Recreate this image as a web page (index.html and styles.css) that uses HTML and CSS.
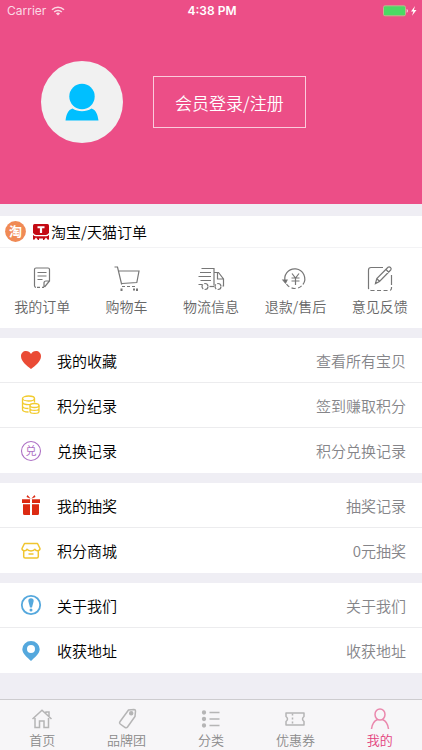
FILE: index.html
```html
<!DOCTYPE html>
<html lang="zh-CN">
<head>
<meta charset="utf-8">
<meta name="viewport" content="width=device-width, initial-scale=1">
<title>我的</title>
<link rel="stylesheet" href="styles.css">
</head>
<body>
<header class="hero">
  <div class="status">
    <div class="status-side">
      <span>Carrier</span>
      <svg width="14" height="10" viewBox="0 0 14 10" fill="none" stroke="currentColor" stroke-width="1.5"><path d="M1 3.7a8.5 8.5 0 0 1 12 0M3.2 6a5.4 5.4 0 0 1 7.6 0"/><path d="M7 9.6 4.9 7.5a3 3 0 0 1 4.2 0z" fill="currentColor" stroke="none"/></svg>
    </div>
    <span class="clock">4:38 PM</span>
    <div class="status-side status-end">
      <svg width="34" height="12" viewBox="0 0 34 12"><rect x=".5" y=".8" width="22" height="10" rx="1.5" fill="#4cd964" stroke="#c3b48f"/><path d="M23.6 4c1.8.2 1.8 3.5 0 3.7z" fill="#f8c5d8"/><path d="M32 1 28 6.600h2.400L29 10.800l4.500-5.800h-2.600z" fill="#fff"/></svg>
    </div>
  </div>
  <div class="profile">
    <div class="avatar">
      <svg width="34" height="38" viewBox="0 0 34 38" fill="#00bfff"><circle cx="17" cy="13.500" r="12.700"/><path d="M.5 37.500C1.500 31 3 27 7.500 25.500c5.500 3.600 13.500 3.600 19 0C31 27 32.500 31 33.500 37.500z"/></svg>
    </div>
    <button class="login" type="button">会员登录/注册</button>
  </div>
</header>
<main>
  <section class="card">
    <h2 class="orders-title">
      <svg width="21" height="21" viewBox="0 0 21 21"><circle cx="10.500" cy="10.500" r="10.400" fill="#f08a55"/><text class="tao" x="10.500" y="15" text-anchor="middle">淘</text></svg>
      <svg class="tmall" width="16" height="16" viewBox="0 0 16 16"><rect width="16" height="16" rx="1.500" fill="#c40a14"/><path d="M4.500 2.300h7v2H9.100v4.600H6.900V4.300H4.500z" fill="#fff"/><path d="M0 9.500Q1 11.500 3 11.700h10q2-.2 3-2.200" fill="none" stroke="#fff" stroke-width="1.200"/><path d="M1 16l2-2.500L5 16zM6 14.500h4V16H6zM11 16l2-2.500 2 2.500z" fill="#fff"/></svg>
      <span>淘宝/天猫订单</span>
    </h2>
    <nav class="shortcuts">
      <a href="#orders"><svg width="28" height="28" viewBox="0 0 28 28"><path d="M8 23.300q-1.500 0-1.500-1.500V5.500Q6.500 4 8 4h12q1.500 0 1.500 1.500V17l-5 6M16 23v-4q0-2 2-2h3.500M9.500 8.500h9M9.500 12h9M9.500 15.500h5"/><path d="M9 23.300h7" stroke-dasharray="3 2"/></svg>我的订单</a>
      <a href="#cart"><svg width="28" height="28" viewBox="0 0 28 28"><path d="M1.500 3h3l4.200 17.500M6 7h20l-2.200 11.500L9 19.500"/><path d="M9 22.500h15" stroke-dasharray="3 2"/><path d="M8.500 24.500v2.500M21 24.500v2M24 24.500v2.500" stroke-width="2"/></svg>购物车</a>
      <a href="#delivery"><svg width="28" height="28" viewBox="0 0 28 28"><path d="M4.500 4.500h12.500v17M17 8.500h4.500l5 6.500V22h-1M20.500 8.500V15h6M3 8.500h11M1.500 12.500H14M3.500 16.500H14M1.500 20.500h3.500"/><path d="M12.500 22.500h4.500"/><g stroke-dasharray="5 1.500"><circle cx="8" cy="22.500" r="3"/><circle cx="21" cy="22.500" r="3"/></g></svg>物流信息</a>
      <a href="#refund"><svg width="28" height="28" viewBox="0 0 28 28"><path d="M4.500 18.500a10 10 0 1 1 17.500 2"/><path d="M5.500 20a10 10 0 0 0 17-.5" stroke-dasharray="4 2.500"/><path d="M2 16h4l-1.500 3z" fill="currentColor"/><path d="m11 9.500 3.500 4.500L18 9.500M14.500 14v7M10.500 14h8M10.500 17h8"/></svg>退款/售后</a>
      <a href="#feedback"><svg width="28" height="28" viewBox="0 0 28 28"><path d="M17 3.500H5Q2.500 3.500 2.500 6v15M25.500 11v10M9.500 19.500l1.300-5L22 3.300q1.200-1 2.500.2t.2 2.500L13.500 17.500zM20 5.500l3 3M10.800 14.500l2.700 3"/><path d="M2.500 21v3q0 2.500 2.500 2.500h18q2.500 0 2.500-2.500v-3" stroke-dasharray="4 2.500"/></svg>意见反馈</a>
    </nav>
  </section>
  <section class="card list">
    <a href="#favorites"><svg width="22" height="22" viewBox="0 0 22 22"><path d="M11 20C7 17 1 12.500 1 7.200 1 4 3.300 2 6 2c2.200 0 4 1 5 3 1-2 2.800-3 5-3 2.700 0 5 2 5 5.200C21 12.500 15 17 11 20z" fill="#ea4b35"/></svg><span>我的收藏</span><small>查看所有宝贝</small></a>
    <a href="#points"><svg width="22" height="22" viewBox="0 0 22 22" fill="none" stroke="#f2cb2e" stroke-width="1.300"><ellipse cx="8.500" cy="4.500" rx="6" ry="2.500"/><path d="M2.500 4.500v11c0 1.500 2.700 2.500 6 2.500M14.500 4.500v4M2.500 8c0 3 7 3 9 2M2.500 12c0 2 3 2.500 6 2.500"/><ellipse cx="14.500" cy="11.500" rx="4.500" ry="2"/><path d="M10 11.500v6c0 2.500 9 2.500 9 0v-6M10 14.500c0 2.500 9 2.500 9 0"/></svg><span>积分纪录</span><small>签到赚取积分</small></a>
    <a href="#exchange"><svg width="22" height="22" viewBox="0 0 22 22"><circle cx="11" cy="11" r="9.500" fill="none" stroke="#ad70c4" stroke-width="1.100"/><text class="dui" x="11" y="15" text-anchor="middle">兑</text></svg><span>兑换记录</span><small>积分兑换记录</small></a>
  </section>
  <section class="card list">
    <a href="#lottery"><svg width="22" height="22" viewBox="0 0 22 22" fill="#dc2a12"><path d="M2 5.300h8V9H2zM12 5.300h8V9h-8zM3 10.200h7V21H4.500Q3 21 3 19.500zM12 10.200h7v9.300q0 1.500-1.500 1.500H12z"/><path d="M10.700 4.700 6.500 3l1-2zM11.300 4.700 15.500 3l-1-2z"/></svg><span>我的抽奖</span><small>抽奖记录</small></a>
    <a href="#mall"><svg width="22" height="22" viewBox="0 0 22 22" fill="none" stroke="#f0c52e" stroke-width="1.500" stroke-linejoin="round"><path d="M4.500 3.500h13L20 8.500c0 2.500-4 3-5 .7-1.500 2.300-6.500 2.300-8 0-1 2.300-5 1.800-5-.7zM3.700 11v5.500Q3.700 18 5.200 18h11.600q1.500 0 1.500-1.500V11M8.500 14h5"/></svg><span>积分商城</span><small>0元抽奖</small></a>
  </section>
  <section class="card list">
    <a href="#about"><svg width="22" height="22" viewBox="0 0 22 22"><circle cx="11" cy="11" r="9.200" fill="none" stroke="#55a8dd" stroke-width="1.800"/><path d="M8.300 7a2.700 2.700 0 0 1 5.400 0L12 13.500h-2z" fill="#55a8dd"/><circle cx="11" cy="16" r="1.500" fill="#55a8dd"/></svg><span>关于我们</span><small>关于我们</small></a>
    <a href="#address"><svg width="22" height="22" viewBox="0 0 22 22"><path fill-rule="evenodd" d="M11 21C7.500 17.500 2.300 13.500 2.300 9.200a8.700 8.200 0 0 1 17.400 0C19.700 13.500 14.500 17.500 11 21zM11 5a4 4 0 1 0 0 8 4 4 0 0 0 0-8z" fill="#55a8dd"/></svg><span>收获地址</span><small>收获地址</small></a>
  </section>
</main>
<nav class="tabs">
  <a href="#home"><svg width="22" height="22" viewBox="0 0 22 22"><path d="M1.500 11 11 2.200l9.500 8.800M4 10v9.500h4.500V13h4.500v6.500h4.500V10M15 5V4h3v4"/></svg>首页</a>
  <a href="#brands"><svg width="22" height="22" viewBox="0 0 22 22"><path d="M12.500 2 18 1.500q1.500 0 1.500 1.500L19 8.500 11.500 19q-1 1.300-2.300.5l-5-3.500q-1.200-1-.3-2.200z"/><circle cx="15.200" cy="5.300" r="1.500" fill="currentColor"/></svg>品牌团</a>
  <a href="#categories"><svg width="22" height="22" viewBox="0 0 22 22"><path d="M9.500 4.500h10M9.500 11h10M9.500 17.500h10"/><g fill="currentColor"><circle cx="4" cy="4.500" r="1.400"/><circle cx="4" cy="11" r="1.400"/><circle cx="4" cy="17.500" r="1.400"/></g></svg>分类</a>
  <a href="#coupons"><svg width="22" height="22" viewBox="0 0 22 22"><path d="M2 5h18v3.500q-3 2.500 0 5V17H2v-3.500q3-2.500 0-5z" stroke-linejoin="round"/><path d="M8.500 5.500v11" stroke-dasharray="2 2"/></svg>优惠券</a>
  <a class="active" href="#me" aria-current="page"><svg width="22" height="22" viewBox="0 0 22 22"><ellipse cx="11" cy="6.500" rx="5" ry="5.500"/><path d="M2.500 21c.5-4.500 2.500-8 6-9.500M19.500 21c-.5-4.500-2.500-8-6-9.500"/></svg>我的</a>
</nav>
</body>
</html>
```
FILE: styles.css
```css
* { box-sizing: border-box; }

body {
  margin: 0;
  min-height: 100vh;
  display: flex;
  flex-direction: column;
  background: #efeef4;
  color: #111;
  font-family: "Noto Sans CJK SC", sans-serif;
  font-weight: 350;
}

a { color: inherit; text-decoration: none; }

.hero {
  padding-bottom: 61px;
  background: #ec4e87;
  color: #fff;
}

.status {
  display: flex;
  align-items: center;
  height: 22px;
  padding: 0 5px 0 7px;
  font: 12px/22px Inter, sans-serif;
}

.status-side {
  flex: 1;
  display: flex;
  align-items: center;
  gap: 5px;
  color: #fbd9e5;
}

.status-end { justify-content: flex-end; }

.clock { font-weight: 600; }

.profile {
  display: flex;
  align-items: center;
  gap: 30px;
  padding: 39px 40px 0 41px;
}

.avatar {
  display: grid;
  place-items: center;
  width: 82px;
  height: 82px;
  border-radius: 50%;
  background: #f1f1f1;
}

.login {
  padding: 0 21px;
  height: 52px;
  border: 1px solid #fbcbdc;
  background: transparent;
  color: #fff;
  font: inherit;
  font-size: 17px;
}

main {
  display: flex;
  flex-direction: column;
  gap: 10px;
  padding: 12px 0 26px;
}

.card { background: #fff; }

.orders-title {
  display: flex;
  align-items: center;
  height: 32px;
  margin: 0;
  padding-left: 5px;
  border-bottom: 1px solid #f3f3f5;
  color: #000;
  font-size: 15px;
  font-weight: 350;
}

.tmall { margin: 0 2px 0 7px; }

.tao { fill: #fff; font-size: 13px; font-weight: 700; }
.dui { fill: #ad70c4; font-size: 11px; font-weight: 400; }

.shortcuts {
  display: grid;
  grid-template-columns: repeat(5, 1fr);
  height: 80px;
  padding-top: 16px;
}

.shortcuts a {
  display: flex;
  flex-direction: column;
  align-items: center;
  gap: 4px;
  color: #666;
  font-size: 14px;
  line-height: 20px;
}

.shortcuts svg {
  fill: none;
  stroke: #777;
  stroke-width: 1.2;
}

.list a {
  display: flex;
  align-items: center;
  height: 45px;
  padding: 0 16px 0 20px;
  color: #000;
  font-size: 15px;
}

.list a:not(:last-child) { border-bottom: 1px solid #ececee; }

.list span { margin-left: 15px; }

.list small {
  margin-left: auto;
  color: #858589;
  font-size: 15px;
}

.tabs {
  display: grid;
  grid-template-columns: repeat(5, 1fr);
  height: 51px;
  margin-top: auto;
  padding-top: 8px;
  border-top: 1px solid #cdcccf;
  background: #f7f6f8;
}

.tabs a {
  display: flex;
  flex-direction: column;
  align-items: center;
  color: #8a8a8a;
  font-size: 13px;
  line-height: 20px;
}

.tabs svg {
  fill: none;
  stroke: currentColor;
  stroke-width: 1.5;
  opacity: .6;
}

.tabs .active { color: #e3407c; }
```
